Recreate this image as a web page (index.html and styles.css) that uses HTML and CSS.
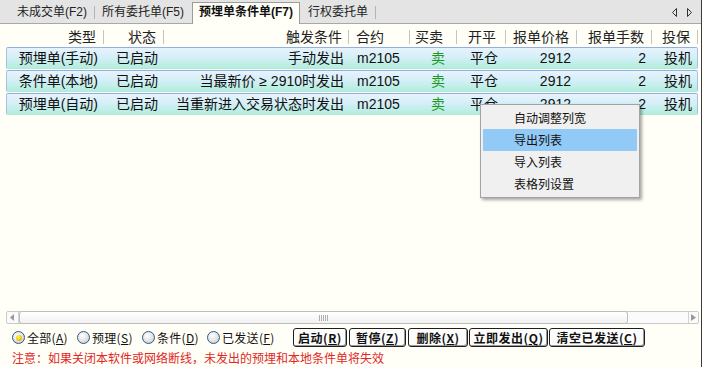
FILE: index.html
```html
<!DOCTYPE html>
<html lang="zh-CN">
<head>
<meta charset="utf-8">
<title>预埋单条件单</title>
<link rel="stylesheet" href="styles.css">
</head>
<body>
<div class="app">
  <div class="tabbar">
    <div class="tab t1">未成交单(F2)</div>
    <div class="tab t2">所有委托单(F5)</div>
    <div class="tab active">预埋单条件单(F7)</div>
    <div class="tab t4">行权委托单</div>
    <svg class="arrows" width="20" height="9" viewBox="0 0 20 9">
      <polygon points="4.5,0.5 0.5,4.5 4.5,8.5" fill="none" stroke="#333" stroke-width="1"/>
      <polygon points="15.5,0.5 19.5,4.5 15.5,8.5" fill="none" stroke="#333" stroke-width="1"/>
    </svg>
  </div>

  <div class="table">
    <div class="head">
      <div class="h c1">类型</div>
      <div class="h c2">状态</div>
      <div class="h c3">触发条件</div>
      <div class="h c4">合约</div>
      <div class="h c5">买卖</div>
      <div class="h c6">开平</div>
      <div class="h c7">报单价格</div>
      <div class="h c8">报单手数</div>
      <div class="h c9">投保</div>
    </div>
    <div class="row">
      <div class="c c1">预埋单(手动)</div>
      <div class="c c2">已启动</div>
      <div class="c c3">手动发出</div>
      <div class="c c4">m2105</div>
      <div class="c c5 sell">卖</div>
      <div class="c c6">平仓</div>
      <div class="c c7">2912</div>
      <div class="c c8">2</div>
      <div class="c c9">投机</div>
    </div>
    <div class="row">
      <div class="c c1">条件单(本地)</div>
      <div class="c c2">已启动</div>
      <div class="c c3">当最新价 ≥ 2910时发出</div>
      <div class="c c4">m2105</div>
      <div class="c c5 sell">卖</div>
      <div class="c c6">平仓</div>
      <div class="c c7">2912</div>
      <div class="c c8">2</div>
      <div class="c c9">投机</div>
    </div>
    <div class="row">
      <div class="c c1">预埋单(自动)</div>
      <div class="c c2">已启动</div>
      <div class="c c3">当重新进入交易状态时发出</div>
      <div class="c c4">m2105</div>
      <div class="c c5 sell">卖</div>
      <div class="c c6">平仓</div>
      <div class="c c7">2912</div>
      <div class="c c8">2</div>
      <div class="c c9">投机</div>
    </div>
  </div>

  <div class="hscroll">
    <div class="sbtn left">
      <svg width="5" height="7" viewBox="0 0 5 7"><polygon points="4,0 0,3.5 4,7" fill="#9a9a9a"/></svg>
    </div>
    <div class="thumb">
      <svg width="10" height="6" viewBox="0 0 10 6">
        <path d="M0.5 0V6M2.5 0V6M4.5 0V6M6.5 0V6M8.5 0V6" stroke="#b0b0b0" stroke-width="1"/>
      </svg>
    </div>
    <div class="track"></div>
    <div class="sbtn right">
      <svg width="5" height="7" viewBox="0 0 5 7"><polygon points="0,0 5,3.5 0,7" fill="#9a9a9a"/></svg>
    </div>
  </div>

  <div class="controls">
    <div class="radios">
      <label class="opt"><span class="radio on"></span>全部(<u>A</u>)</label>
      <label class="opt"><span class="radio"></span>预理(<u>S</u>)</label>
      <label class="opt"><span class="radio"></span>条件(<u>D</u>)</label>
      <label class="opt"><span class="radio"></span>已发送(<u>F</u>)</label>
    </div>
    <div class="buttons">
      <button class="btn b-start">启动(<u>R</u>)</button>
      <button class="btn b-pause">暂停(<u>Z</u>)</button>
      <button class="btn b-del">删除(<u>X</u>)</button>
      <button class="btn b-send">立即发出(<u>Q</u>)</button>
      <button class="btn b-clear">清空已发送(<u>C</u>)</button>
    </div>
  </div>

  <div class="notice">注意：如果关闭本软件或网络断线，未发出的预埋和本地条件单将失效</div>

  <div class="menu">
    <div class="mi">自动调整列宽</div>
    <div class="mi hot">导出列表</div>
    <div class="mi">导入列表</div>
    <div class="mi">表格列设置</div>
  </div>
</div>
</body>
</html>
```

FILE: styles.css
```css
html, body {
  margin: 0;
  padding: 0;
  background: #fffff7;
}

.app {
  position: relative;
  width: 701px;
  height: 367px;
  border-right: 1px solid #3c3c3c;
  display: flex;
  flex-direction: column;
  font-family: "Liberation Sans", "Noto Sans CJK SC", sans-serif;
  color: #111;
  overflow: hidden;
}

/* ---------- tabs ---------- */
.tabbar {
  height: 23px;
  flex: none;
  background: #e4e4e4;
  border-bottom: 1px solid #a8a8a8;
  display: flex;
  align-items: center;
  padding-left: 10px;
  font-size: 12px;
  color: #222;
}

.tab {
  height: 13px;
  line-height: 13px;
  margin-top: 2px;
  white-space: nowrap;
}

.t1 {
  padding: 0 7px;
  border-right: 1px solid #b4b4b4;
}

.t2 {
  padding: 0 8px 0 7px;
}

.t4 {
  padding: 0 7px 0 8px;
  border-right: 1px solid #b4b4b4;
}

.tab.active {
  align-self: flex-end;
  box-sizing: border-box;
  height: 22px;
  line-height: 19px;
  margin-bottom: -1px;
  padding: 0 6px;
  border: 1px solid #9c9c9c;
  border-bottom: none;
  background: #fffff7;
  font-weight: bold;
  color: #111;
}

.arrows {
  margin-left: auto;
  margin-right: 9px;
  margin-top: 1px;
}

/* ---------- table ---------- */
.table {
  flex: 1;
  min-height: 0;
}

.head,
.row {
  display: grid;
  grid-template-columns: 98px 60px 185px 61px 47px 49px 71px 75px 46px;
  margin-left: 6px;
  width: 692px;
  font-size: 14px;
  white-space: nowrap;
}

.head {
  height: 23px;
}

.h {
  box-sizing: border-box;
  height: 14px;
  line-height: 14px;
  margin-top: 6px;
  border-right: 1px solid #c4c4c4;
  text-align: right;
  color: #222;
}

.row {
  box-sizing: border-box;
  height: 22px;
  margin-bottom: 1px;
  border: 1px solid #a9c0e4;
  border-top-color: #94b0e2;
  border-bottom-color: #b0e8da;
  border-radius: 2px;
  background: linear-gradient(#e6f3fd 0%, #d6eff8 45%, #b2eedd 100%);
}

.c {
  line-height: 20px;
  text-align: right;
}

.c1 { padding-right: 7px; }
.c2 { padding-right: 7px; }
.c3 { padding-right: 6px; }
.c4 { padding-left: 7px; text-align: left; }
.c5 { padding-right: 13px; }
.c6 { padding-right: 9px; }
.c7 { padding-right: 7px; }
.c8 { padding-right: 7px; }
.c9 { padding-right: 7px; }

.sell {
  color: #1d9a1d;
}

/* ---------- horizontal scrollbar ---------- */
.hscroll {
  flex: none;
  box-sizing: border-box;
  height: 13px;
  margin-left: 6px;
  width: 693px;
  border: 1px solid #cacaca;
  border-radius: 2px;
  background: #fbfbfb;
  display: flex;
}

.sbtn {
  width: 11px;
  display: flex;
  align-items: center;
  justify-content: center;
}

.sbtn.left {
  border-right: 1px solid #d2d2d2;
}

.sbtn.right {
  width: 9px;
  border-left: 1px solid #d2d2d2;
}

.thumb {
  box-sizing: border-box;
  width: 609px;
  border: 1px solid #bdbdbd;
  border-radius: 3px;
  background: linear-gradient(#ffffff, #f2f2f2);
  display: flex;
  align-items: center;
  justify-content: center;
  margin-top: -1px;
  margin-bottom: -1px;
}

.track {
  flex: 1;
}

/* ---------- controls ---------- */
.controls {
  flex: none;
  height: 19px;
  margin-top: 4px;
  display: flex;
  align-items: center;
  padding-left: 12px;
  font-family: "Noto Sans CJK SC", sans-serif;
  font-size: 12px;
  color: #111;
}

.radios {
  width: 281px;
  display: grid;
  grid-template-columns: 65px 65px 65px auto;
  align-items: center;
}

.opt {
  display: flex;
  align-items: center;
  line-height: 14px;
  white-space: nowrap;
  letter-spacing: 0.3px;
}

.radio {
  box-sizing: border-box;
  width: 13px;
  height: 13px;
  margin-right: 2px;
  border: 1px solid #2a5a88;
  border-radius: 50%;
  background: radial-gradient(circle at 40% 35%, #ffffff 0%, #e2e2e2 55%, #bdbdbd 100%);
  display: flex;
  align-items: center;
  justify-content: center;
}

.radio.on::after {
  content: "";
  width: 6px;
  height: 6px;
  border-radius: 50%;
  background: radial-gradient(circle at 40% 35%, #fff36a 0%, #f2c400 60%, #c99800 100%);
}

.buttons {
  display: flex;
}

.btn {
  box-sizing: border-box;
  height: 19px;
  margin: 0 2px 0 0;
  padding: 0;
  border: 1px solid #1e1e1e;
  border-radius: 3px;
  background: #fcfcfc;
  box-shadow: inset -1px -1px 0 #9a9a9a, inset 1px 1px 0 #ffffff;
  font-family: "Noto Sans CJK SC", sans-serif;
  font-size: 12px;
  font-weight: bold;
  line-height: 16px;
  letter-spacing: 0.5px;
  color: #111;
  white-space: nowrap;
  text-align: center;
}

.b-start { width: 54px; }
.b-pause { width: 57px; }
.b-del { width: 60px; margin-right: 1px; }
.b-send { width: 79px; margin-right: 1px; }
.b-clear { width: 96px; }

/* ---------- notice ---------- */
.notice {
  flex: none;
  margin-top: 3px;
  margin-bottom: 1px;
  padding-left: 12px;
  height: 16px;
  line-height: 16px;
  font-family: "Noto Sans CJK SC", sans-serif;
  font-size: 12px;
  color: #e02828;
  white-space: nowrap;
}

/* ---------- context menu ---------- */
.menu {
  position: absolute;
  left: 480px;
  top: 104px;
  width: 160px;
  box-sizing: border-box;
  padding: 2px;
  background: #f0f0f0;
  border: 1px solid #a3a3a3;
  box-shadow: 2px 2px 3px rgba(0, 0, 0, 0.35);
  font-family: "Noto Sans CJK SC", sans-serif;
  font-size: 12px;
  color: #111;
}

.mi {
  height: 22px;
  line-height: 22px;
  padding-left: 31px;
}

.mi.hot {
  background: #91c9f7;
}
```
